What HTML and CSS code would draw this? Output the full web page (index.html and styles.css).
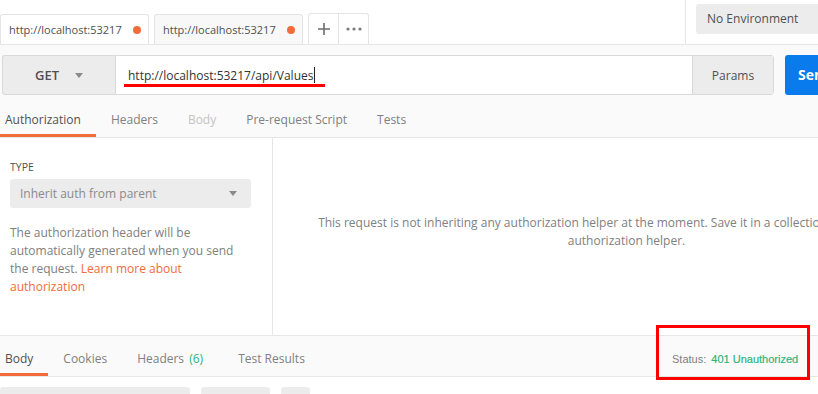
FILE: index.html
```html
<!DOCTYPE html>
<html lang="en">
<head>
    <meta charset="UTF-8">
    <title>Postman - Authorization</title>
    <link rel="stylesheet" href="styles.css">
</head>
<body>
    <div class="app">
        <div class="topbar">
            <div class="tabs">
                <div class="tab active"><span>http://localhost:53217</span><i class="dot"></i></div>
                <div class="tab"><span>http://localhost:53217</span><i class="dot"></i></div>
                <div class="tab-actions">
                    <div class="tab-action">
                        <svg width="14" height="14" viewBox="0 0 14 14"><path d="M7 1v12M1 7h12" stroke="#6b6b6b" stroke-width="1.6"/></svg>
                    </div>
                    <div class="tab-action">
                        <svg width="16" height="4" viewBox="0 0 16 4"><circle cx="2" cy="2" r="1.6" fill="#7a7a7a"/><circle cx="8" cy="2" r="1.6" fill="#7a7a7a"/><circle cx="14" cy="2" r="1.6" fill="#7a7a7a"/></svg>
                    </div>
                </div>
            </div>
            <div class="env">
                <div class="env-select">No Environment</div>
            </div>
        </div>

        <div class="request">
            <div class="request-bar">
                <div class="method">GET <i class="caret"></i></div>
                <div class="url-group">
                    <div class="url">http://localhost:53217/api/Values<span class="cursor"></span></div>
                    <div class="params">Params</div>
                </div>
                <div class="send">Send</div>
            </div>
            <div class="tab-row">
                <div class="sub-tab active">Authorization</div>
                <div class="sub-tab">Headers</div>
                <div class="sub-tab disabled">Body</div>
                <div class="sub-tab">Pre-request Script</div>
                <div class="sub-tab">Tests</div>
            </div>
        </div>

        <div class="auth">
            <div class="auth-left">
                <div class="label">TYPE</div>
                <div class="select">Inherit auth from parent <i class="caret"></i></div>
                <p class="desc">The authorization header will be automatically generated when you send the request. <a href="#">Learn more about authorization</a></p>
            </div>
            <div class="auth-right">
                <p>This request is not inheriting any authorization helper at the moment. Save it in a collection to use the parent's authorization helper.</p>
            </div>
        </div>

        <div class="response">
            <div class="tab-row">
                <div class="sub-tab active">Body</div>
                <div class="sub-tab">Cookies</div>
                <div class="sub-tab">Headers <span class="count">(6)</span></div>
                <div class="sub-tab">Test Results</div>
            </div>
            <div class="status">Status: <span class="code">401 Unauthorized</span></div>
        </div>

        <div class="response-tools">
            <div class="tool wide"></div>
            <div class="tool mid"></div>
            <div class="tool small"></div>
        </div>

        <div class="mark url-mark"></div>
        <div class="mark status-mark"></div>
    </div>
</body>
</html>
```

FILE: styles.css
```css
body {
    margin: 0;
    font-family: 'Open Sans', sans-serif;
    color: #505050;
    background: #fff;
    overflow: hidden;
}
.app {
    width: 980px;
    position: relative;
}

/* top tabs */
.topbar {
    display: flex;
    height: 44px;
    border-bottom: 1px solid #e6e6e6;
}
.tabs {
    display: flex;
    align-items: flex-end;
    gap: 5px;
    flex: 1;
}
.tab {
    display: flex;
    align-items: center;
    justify-content: space-between;
    box-sizing: border-box;
    width: 149px;
    height: 30px;
    padding: 0 7px 0 8px;
    border: 1px solid #e4e4e4;
    border-bottom: none;
    border-radius: 3px 3px 0 0;
    background: #f8f8f8;
    font-size: 11px;
}
.tab.active {
    background: #fff;
}
.dot {
    width: 8px;
    height: 8px;
    border-radius: 50%;
    background: #f26b3a;
}
.tab-actions {
    display: flex;
    height: 30px;
    border: 1px solid #e4e4e4;
    border-bottom: none;
    border-radius: 3px 3px 0 0;
}
.tab-action {
    display: flex;
    align-items: center;
    justify-content: center;
    width: 29px;
}
.tab-action + .tab-action {
    border-left: 1px solid #e4e4e4;
}
.env {
    width: 284px;
    border-left: 1px solid #e6e6e6;
    padding: 4px 0 0 10px;
}
.env-select {
    height: 30px;
    line-height: 30px;
    padding-left: 11px;
    background: #ececec;
    border-radius: 3px;
    font-size: 12px;
}

/* request */
.request {
    background: #fafafa;
    border-bottom: 1px solid #e6e6e6;
}
.request-bar {
    display: flex;
    padding: 10px 0 0 2px;
    height: 40px;
}
.method {
    display: flex;
    align-items: center;
    box-sizing: border-box;
    width: 113px;
    padding-left: 32px;
    background: #ececec;
    border: 1px solid #d9d9d9;
    border-right: none;
    border-radius: 3px 0 0 3px;
    font-size: 13px;
    font-weight: 600;
}
.caret {
    width: 0;
    height: 0;
    border-left: 4px solid transparent;
    border-right: 4px solid transparent;
    border-top: 5px solid #8a8a8a;
}
.method .caret {
    margin-left: 16px;
}
.url-group {
    display: flex;
    border: 1px solid #d9d9d9;
    border-radius: 0 3px 3px 0;
}
.url {
    display: flex;
    align-items: center;
    width: 564px;
    padding-left: 12px;
    background: #fff;
    font-size: 12px;
    color: #333;
}
.cursor {
    width: 1px;
    height: 16px;
    margin-left: 1px;
    background: #222;
}
.params {
    width: 80px;
    border-left: 1px solid #d9d9d9;
    background: #ececec;
    display: flex;
    align-items: center;
    justify-content: center;
    font-size: 12px;
}
.send {
    margin-left: 11px;
    width: 100px;
    border-radius: 3px;
    background: #097bed;
    color: #fff;
    font-weight: 700;
    font-size: 14px;
    line-height: 40px;
    padding-left: 13px;
}
.tab-row {
    display: flex;
    margin-left: -10px;
}
.request .tab-row {
    margin-top: 10px;
}
.sub-tab {
    padding: 0 15px;
    height: 29px;
    line-height: 29px;
    border-bottom: 3px solid transparent;
    font-size: 12px;
    color: #808080;
}
.sub-tab.active {
    color: #505050;
    border-bottom-color: #f26b3a;
}
.sub-tab.disabled {
    color: #c4c4c4;
}
.count {
    margin: 0 5px 0 2px;
    color: #2eb57c;
}

/* authorization */
.auth {
    display: flex;
    height: 197px;
    border-bottom: 1px solid #e6e6e6;
}
.auth-left {
    width: 262px;
    padding: 0 0 0 10px;
    border-right: 1px solid #e6e6e6;
}
.label {
    margin-top: 22px;
    font-size: 10.5px;
    line-height: 14px;
}
.select {
    display: flex;
    align-items: center;
    justify-content: space-between;
    width: 241px;
    height: 29px;
    margin-top: 5px;
    padding: 0 14px 0 10px;
    box-sizing: border-box;
    background: #ececec;
    border-radius: 3px;
    font-size: 12px;
    color: #8a8a8a;
}
.desc {
    width: 232px;
    margin: 16px 0 0;
    font-size: 12px;
    line-height: 18px;
    color: #808080;
}
.desc a {
    color: #f26b3a;
    text-decoration: none;
}
.auth-right {
    flex: 1;
    padding: 76px 20px 0;
    text-align: center;
}
.auth-right p {
    margin: 0;
    font-size: 12px;
    line-height: 18px;
    color: #808080;
}

/* response */
.response {
    display: flex;
    justify-content: space-between;
    background: #fafafa;
    border-bottom: 1px solid #e6e6e6;
    padding-top: 8px;
}
.status {
    width: 308px;
    font-family: 'Liberation Sans', Arial, sans-serif;
    font-size: 11px;
    color: #808080;
    padding-top: 9px;
}
.status .code {
    margin-left: 2px;
    color: #2eb57c;
    -webkit-text-stroke: 0.2px #2eb57c;
}
.response-tools {
    display: flex;
    gap: 11px;
    padding-top: 10px;
}
.tool {
    height: 20px;
    background: #ececec;
    border-radius: 3px;
}
.tool.wide {
    width: 190px;
}
.tool.mid {
    width: 69px;
}
.tool.small {
    width: 29px;
}

/* annotation marks */
.mark {
    position: absolute;
}
.url-mark {
    left: 124px;
    top: 84px;
    width: 201px;
    height: 3px;
    background: #ff0000;
}
.status-mark {
    left: 656px;
    top: 325px;
    width: 148px;
    height: 49px;
    border: 3px solid #ff0000;
}
```
